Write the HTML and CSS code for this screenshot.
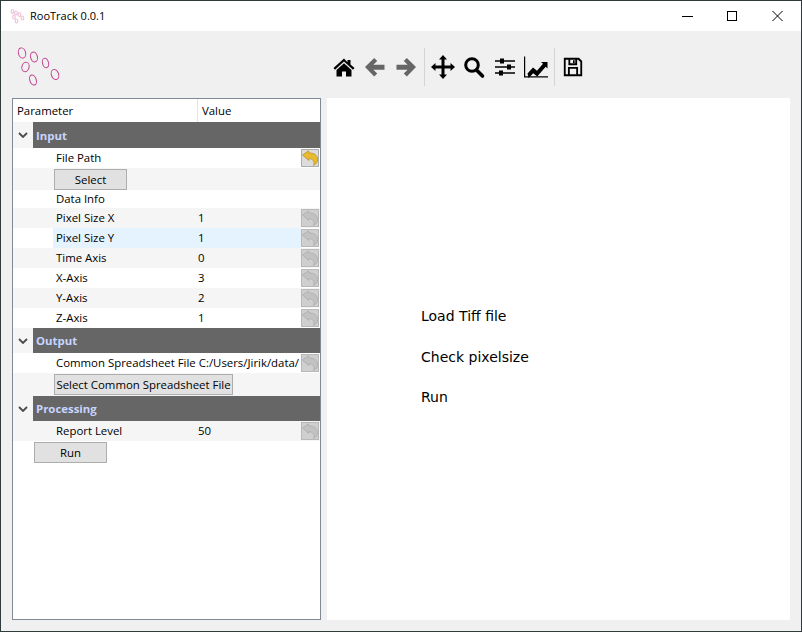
FILE: index.html
```html
<!DOCTYPE html>
<html lang="en">
<head>
<meta charset="utf-8">
<title>RooTrack 0.0.1</title>
<link rel="stylesheet" href="styles.css">
</head>
<body>
<div class="window">
  <svg width="0" height="0" class="defs">
    <defs>
      <symbol id="undo" viewBox="0 0 16 16">
        <path d="M0.500 5 L6.500 0.800 L6.800 3 C11.500 2.600 15.600 5 15.600 9.500 C15.600 12.300 14 14.300 11.500 15.300 C12.800 12.600 12 9 6.800 8.600 L6.800 10.500 Z"/>
      </symbol>
    </defs>
  </svg>
  <header class="titlebar">
    <svg class="appicon" viewBox="0 0 16 16" width="16" height="16">
      <g fill="none" stroke="#eec3da" stroke-width="1.2">
        <ellipse cx="2.5" cy="3.5" rx="1.3" ry="2"/>
        <ellipse cx="6" cy="5" rx="1.3" ry="2"/>
        <ellipse cx="9.5" cy="6.5" rx="1.3" ry="2"/>
        <ellipse cx="4" cy="9" rx="1.3" ry="2"/>
        <ellipse cx="12.5" cy="10" rx="1.3" ry="2"/>
        <ellipse cx="6.5" cy="13" rx="1.3" ry="2"/>
      </g>
    </svg>
    <span class="apptitle">RooTrack 0.0.1</span>
    <div class="winctl">
      <svg viewBox="0 0 45 30" width="45" height="30"><path d="M17 15.5H28" stroke="#000" fill="none"/></svg>
      <svg viewBox="0 0 45 30" width="45" height="30"><rect x="17.5" y="10.5" width="9" height="9" stroke="#000" fill="none"/></svg>
      <svg viewBox="0 0 45 30" width="45" height="30"><path d="M17.5 10L27.5 20M27.5 10L17.5 20" stroke="#000" fill="none"/></svg>
    </div>
  </header>

  <section class="topband">
    <svg class="logo" viewBox="0 0 52 46" width="52" height="46">
      <g fill="none" stroke="#c23f8e" stroke-width="1">
        <ellipse cx="10" cy="8" rx="3.6" ry="5.2" transform="rotate(-15 10 8)"/>
        <ellipse cx="22" cy="12" rx="3.4" ry="5" transform="rotate(-15 22 12)"/>
        <ellipse cx="33.500" cy="18" rx="3" ry="4.8" transform="rotate(-15 33.500 18)"/>
        <ellipse cx="13.500" cy="22" rx="3.6" ry="4.8" transform="rotate(15 13.500 22)"/>
        <ellipse cx="43" cy="29.500" rx="3.6" ry="5.2" transform="rotate(-20 43 29.500)"/>
        <ellipse cx="21" cy="35" rx="3.200" ry="5.200" transform="rotate(-18 21 35)"/>
      </g>
    </svg>
    <nav class="toolbar">
      <button class="tool" aria-label="Home"><svg viewBox="0 0 24 24" width="24" height="24"><path d="M12 3.500L1.500 13l1.500 1.700L12 6.600l9 8.100 1.500-1.700-4-3.600V5h-3v2.200z"/><path d="M12 8.200L4.500 15v6.500h5.500v-5h4v5h5.500V15z"/></svg></button>
      <button class="tool" aria-label="Back"><svg viewBox="0 0 24 24" width="24" height="24"><path fill="#666" d="M11.200 3l3 3-3.800 3.700H21.500v5H10.400L14.200 18.400l-3 3L2 12z"/></svg></button>
      <button class="tool" aria-label="Forward"><svg viewBox="0 0 24 24" width="24" height="24"><path fill="#666" d="M12.800 3l-3 3 3.800 3.700H2.500v5h11.100L9.800 18.400l3 3L22 12z"/></svg></button>
      <span class="sep"></span>
      <button class="tool" aria-label="Pan"><svg viewBox="0 0 24 24" width="24" height="24"><path d="M12 0l4 4.500h-2.500v6h6V8L24 12l-4.500 4v-2.500h-6v6H16L12 24l-4-4.500h2.500v-6h-6V16L0 12l4.500-4v2.500h6v-6H8z"/></svg></button>
      <button class="tool" aria-label="Zoom"><svg viewBox="0 0 24 24" width="24" height="24"><circle cx="10" cy="10" r="6.300" fill="none" stroke="#000" stroke-width="3"/><path d="M14.500 15l6 6" stroke="#000" stroke-width="3.600" stroke-linecap="round"/></svg></button>
      <button class="tool" aria-label="Configure"><svg viewBox="0 0 24 24" width="24" height="24"><path d="M2 5.300h20v1.400H2zM2 11.300h20v1.400H2zM2 17.300h20v1.400H2z"/><rect x="7" y="3.500" width="4" height="5"/><rect x="14" y="9.500" width="4" height="5"/><rect x="6" y="15.500" width="4" height="5"/></svg></button>
      <button class="tool" aria-label="Edit"><svg viewBox="0 0 24 24" width="24" height="24"><path d="M0 1.500h1.200V21.300H24v1.200H0z"/><path d="M3.500 18.500l5.500-6 4 3.300 6-7-2-1.700h6.500v6.500l-1.800-1.800-8.500 9.700-4-3.300-4.500 4.700z"/></svg></button>
      <span class="sep sep-wide"></span>
      <button class="tool tool-save" aria-label="Save"><svg viewBox="0 0 24 24" width="22" height="22"><path fill-rule="evenodd" d="M2 2h16.500L22 5.500V22H2zM4 4v16h2.500v-8h11v8H20V6.500L17.500 4H16.500v6H7V4zM8.500 14v6h7v-6zM9 4v4h5.500V4zM12 4.500h1.800v3H12z"/></svg></button>
    </nav>
  </section>

  <main class="main">
    <aside class="tree">
      <div class="treehead"><span class="col-param">Parameter</span><span class="col-value">Value</span></div>

      <div class="group group-a"><span class="chev"><svg viewBox="0 0 10 6" width="10" height="6"><path d="M1 1l4 4 4-4" fill="none" stroke="#4a4a4a" stroke-width="1.800"/></svg></span><span class="grouplabel">Input</span></div>
      <div class="row row-first"><span class="name">File Path</span><span class="value"></span><span class="reset active"><svg width="16" height="16"><use href="#undo"/></svg></span></div>
      <div class="row row-btn alt"><button class="pbtn">Select</button></div>
      <div class="row row-info"><span class="name">Data Info</span></div>
      <div class="row alt"><span class="name">Pixel Size X</span><span class="value">1</span><span class="reset"><svg width="16" height="16"><use href="#undo"/></svg></span></div>
      <div class="row hilite"><span class="name">Pixel Size Y</span><span class="value">1</span><span class="reset"><svg width="16" height="16"><use href="#undo"/></svg></span></div>
      <div class="row alt"><span class="name">Time Axis</span><span class="value">0</span><span class="reset"><svg width="16" height="16"><use href="#undo"/></svg></span></div>
      <div class="row"><span class="name">X-Axis</span><span class="value">3</span><span class="reset"><svg width="16" height="16"><use href="#undo"/></svg></span></div>
      <div class="row alt"><span class="name">Y-Axis</span><span class="value">2</span><span class="reset"><svg width="16" height="16"><use href="#undo"/></svg></span></div>
      <div class="row"><span class="name">Z-Axis</span><span class="value">1</span><span class="reset"><svg width="16" height="16"><use href="#undo"/></svg></span></div>

      <div class="group"><span class="chev"><svg viewBox="0 0 10 6" width="10" height="6"><path d="M1 1l4 4 4-4" fill="none" stroke="#4a4a4a" stroke-width="1.800"/></svg></span><span class="grouplabel">Output</span></div>
      <div class="row"><span class="name name-long">Common Spreadsheet File</span><span class="value value-long">C:/Users/Jirik/data/</span><span class="reset"><svg width="16" height="16"><use href="#undo"/></svg></span></div>
      <div class="row row-btn2 alt"><button class="pbtn pbtn-wide">Select Common Spreadsheet File</button></div>

      <div class="group"><span class="chev"><svg viewBox="0 0 10 6" width="10" height="6"><path d="M1 1l4 4 4-4" fill="none" stroke="#4a4a4a" stroke-width="1.800"/></svg></span><span class="grouplabel">Processing</span></div>
      <div class="row alt"><span class="name">Report Level</span><span class="value">50</span><span class="reset"><svg width="16" height="16"><use href="#undo"/></svg></span></div>
      <div class="row row-run"><button class="pbtn pbtn-run">Run</button></div>
    </aside>

    <article class="canvas">
      <p class="step step-1">Load Tiff file</p>
      <p class="step step-2">Check pixelsize</p>
      <p class="step step-3">Run</p>
    </article>
  </main>
</div>
</body>
</html>
```

FILE: styles.css
```css
* { box-sizing: border-box; }
html, body { margin: 0; padding: 0; }
body {
  width: 802px;
  height: 632px;
  overflow: hidden;
  font-family: "Open Sans", "Noto Sans", sans-serif;
  font-size: 11.4px;
  color: #000;
}
.defs { position: absolute; }
.window {
  width: 802px;
  height: 632px;
  border: 1px solid #2f3b3b;
  background: #f0f0f0;
  display: flex;
  flex-direction: column;
}
.titlebar {
  height: 30px;
  flex: none;
  background: #fff;
  display: flex;
  align-items: center;
  padding-left: 9px;
}
.appicon { flex: none; }
.apptitle {
  margin-left: 4px;
  font-size: 11px;
  line-height: 30px;
}
.winctl { margin-left: auto; display: flex; margin-right: 1px; }
.winctl svg { display: block; }

.topband {
  height: 67px;
  flex: none;
  display: flex;
  align-items: flex-start;
}
.logo { flex: none; margin: 14px 0 0 11px; display: block; }
.toolbar {
  display: flex;
  align-items: center;
  margin: 17px 0 0 264px;
  height: 38px;
}
.tool {
  width: 31px;
  height: 38px;
  padding: 0;
  border: 0;
  background: none;
  display: flex;
  align-items: center;
  justify-content: center;
}
.tool svg { display: block; }
.tool-save { padding-right: 2px; }
.sep {
  width: 6px;
  height: 38px;
  display: flex;
  justify-content: center;
}
.sep::before {
  content: "";
  width: 1px;
  background: #d4d4d4;
}
.sep-wide { width: 7px; }

.main {
  flex: none;
  height: 522px;
  display: flex;
  padding-left: 11px;
  gap: 6px;
}
.tree {
  width: 309px;
  height: 522px;
  background: #fff;
  border: 1px solid #808a94;
  display: flex;
  flex-direction: column;
}
.treehead {
  height: 23px;
  flex: none;
  display: flex;
  align-items: center;
  background: #fff;
}
.col-param {
  width: 185px;
  padding-left: 4px;
  height: 23px;
  line-height: 24px;
  border-right: 1px solid #e4e4e4;
}
.col-value { padding-left: 4px; line-height: 24px; }

.group {
  height: 25px;
  flex: none;
  display: flex;
  background: linear-gradient(to right, #f5f5f5 20px, #666 20px);
}
.group-a { height: 26px; }
.group-a .grouplabel { line-height: 27px; }
.chev {
  width: 20px;
  display: flex;
  align-items: center;
  justify-content: center;
}
.chev svg { display: block; }
.grouplabel {
  padding-left: 3px;
  color: #c8d4ff;
  font-weight: 700;
  line-height: 25px;
}
.row {
  height: 20px;
  flex: none;
  display: flex;
  align-items: center;
  background: #fff;
}
.alt { background: #f5f5f5; }
.hilite {
  background: linear-gradient(to right, #fff 40px, #e5f3ff 40px, #e5f3ff 288px, #fff 288px);
}
.name {
  width: 185px;
  padding-left: 43px;
  padding-bottom: 1px;
  flex: none;
  white-space: nowrap;
}
.name-long { width: auto; flex: none; }
.value {
  flex: 1;
  padding-bottom: 1px;
}
.value-long {
  margin-left: 3px;
  overflow: hidden;
  white-space: nowrap;
  min-width: 0;
}
.reset {
  width: 18px;
  height: 18px;
  flex: none;
  margin: 0 1px;
  background: #cfcfcf;
  border: 1px solid #b8b8b8;
  display: flex;
  align-items: center;
  justify-content: center;
  fill: #c2c2c2;
  stroke: #a9a9a9;
  stroke-width: 0.7;
}
.reset.active {
  background: #dcdcdc;
  fill: #e8bb2e;
  stroke: #b48d1a;
  border-color: #adadad;
}
.reset svg { display: block; }
.pbtn {
  font: inherit;
  color: #000;
  background: #e1e1e1;
  border: 1px solid #adadad;
  height: 21px;
  padding: 0;
  margin-left: 41px;
  width: 73px;
}
.row-btn { height: 22px; }
.row-info { height: 18px; }
.row-btn2 { height: 23px; }
.pbtn-wide { width: 179px; white-space: nowrap; }
.row-run { height: 23px; }
.pbtn-run { margin-left: 21px; }

.canvas {
  width: 463px;
  height: 522px;
  background: #fff;
  display: flex;
  flex-direction: column;
  padding: 210px 0 0 94px;
  font-family: "DejaVu Sans", sans-serif;
  font-size: 14px;
}
.step { margin: 0 0 25px; line-height: 16px; }
.step-2 { margin-bottom: 24px; }
.step-3 { margin-bottom: 0; }
```
